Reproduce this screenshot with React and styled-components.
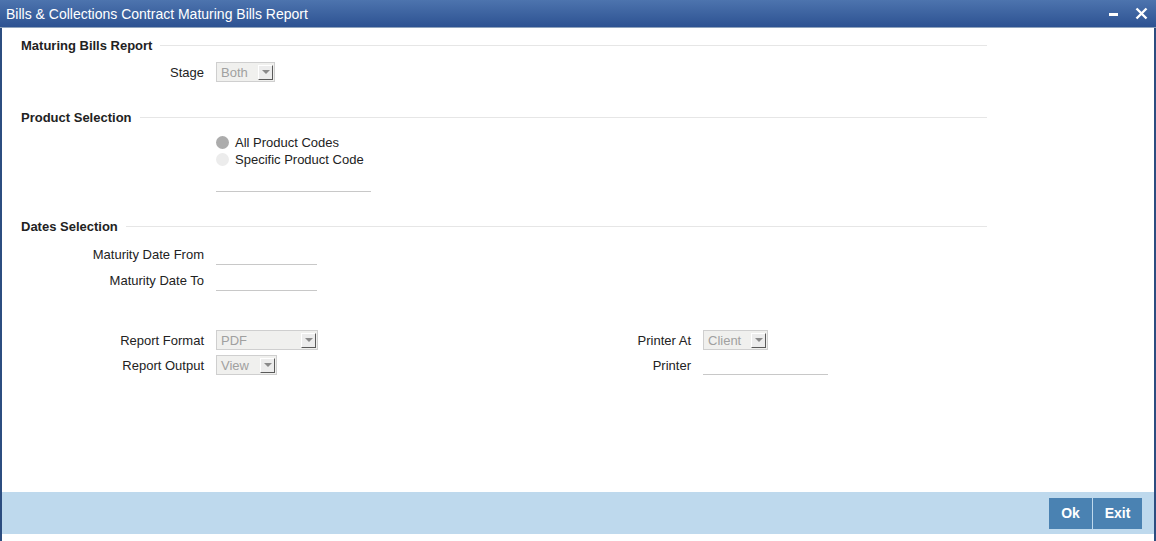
import React from "react";
import styled, { createGlobalStyle } from "styled-components";

const Global = createGlobalStyle`
  html, body { margin: 0; padding: 0; background: #fff; }
  body { font-family: "Liberation Sans", Arial, sans-serif; }
`;

const Window = styled.div`
  width: 1156px;
  height: 541px;
  box-sizing: border-box;
  display: flex;
  flex-direction: column;
  border-left: 2px solid #2c4d80;
  border-right: 2px solid #2c4d80;
  background: #fff;
  padding-bottom: 7px;
`;

const TitleBar = styled.div`
  height: 28px;
  margin: 0 -2px;
  box-sizing: border-box;
  display: flex;
  align-items: center;
  padding: 0 8px 0 6px;
  background: linear-gradient(#4d74ae, #2d5292);
  border-bottom: 1px solid #8fa3bd;
  color: #fff;
  font-size: 14px;
`;

const Title = styled.div`
  flex: 1;
`;

const WinButtons = styled.div`
  display: flex;
  align-items: center;
  gap: 16px;
`;

const Content = styled.div`
  flex: 1;
  padding: 7px 0 0 19px;
`;

const Section = styled.div`
  width: 966px;
  margin-top: ${(p) => p.$top || 0}px;
`;

const Heading = styled.div`
  display: flex;
  align-items: center;
  height: 20px;
  font-size: 13px;
  font-weight: bold;
  color: #222;
  gap: 8px;
  &::after {
    content: "";
    flex: 1;
    height: 1px;
    background: #e6e6e6;
  }
`;

const Row = styled.div`
  display: grid;
  grid-template-columns: 183px auto;
  column-gap: 12px;
  align-items: center;
  height: ${(p) => p.$h || 20}px;
  margin-top: ${(p) => p.$top || 0}px;
`;

const Label = styled.div`
  text-align: right;
  font-size: 13px;
  color: #222;
`;

const SelectBox = styled.div`
  width: ${(p) => p.$w}px;
  height: 20px;
  box-sizing: border-box;
  border: 1px solid #cfcfcf;
  background: #f0f0ee;
  display: flex;
  align-items: center;
  justify-content: space-between;
  padding: 0 1px 0 4px;
  font-size: 13px;
  color: #a0a0a0;
`;

const ArrowBtn = styled.div`
  width: 15px;
  height: 15px;
  box-sizing: border-box;
  border-top: 1px solid #fff;
  border-left: 1px solid #fff;
  border-right: 1px solid #5a5a5a;
  border-bottom: 1px solid #5a5a5a;
  background: #ececec;
  display: flex;
  align-items: center;
  justify-content: center;
  &::after {
    content: "";
    border-left: 4px solid transparent;
    border-right: 4px solid transparent;
    border-top: 4px solid #8a8a8a;
  }
`;

const Underline = styled.div`
  width: ${(p) => p.$w}px;
  height: ${(p) => p.$h || 20}px;
  box-sizing: border-box;
  border-bottom: 1px solid #c8c8c8;
`;

const RadioRow = styled.label`
  display: flex;
  align-items: center;
  gap: 6px;
  height: 17px;
  font-size: 13px;
  color: #222;
`;

const RadioDot = styled.span`
  width: 13px;
  height: 13px;
  border-radius: 50%;
  background: ${(p) => (p.$on ? "#acacac" : "#ececec")};
`;

const RadioGroup = styled.div`
  margin-top: 7px;
  margin-left: 195px;
`;

const Split = styled.div`
  display: grid;
  grid-template-columns: 487px auto;
  margin-top: 40px;
`;

const Col = styled.div`
  display: flex;
  flex-direction: column;
  gap: 5px;
`;

const Footer = styled.div`
  height: 42px;
  background: #bed9ed;
  display: flex;
  justify-content: flex-end;
  align-items: center;
  padding-right: 12px;
  gap: 1px;
`;

const Btn = styled.button`
  width: ${(p) => p.$w}px;
  height: 31px;
  border: none;
  background: #4a82b2;
  color: #fff;
  font-family: "Liberation Sans", Arial, sans-serif;
  font-size: 14px;
  font-weight: bold;
  padding: 0;
`;

function Select({ w, value }) {
  return (
    <SelectBox $w={w}>
      <span>{value}</span>
      <ArrowBtn />
    </SelectBox>
  );
}

export default function App() {
  return (
    <>
      <Global />
      <Window>
        <TitleBar>
          <Title>Bills &amp; Collections Contract Maturing Bills Report</Title>
          <WinButtons>
            <svg width="10" height="10" viewBox="0 0 10 10">
              <rect x="0" y="4" width="9" height="3" fill="#fff" />
            </svg>
            <svg width="13" height="13" viewBox="0 0 13 13">
              <path d="M1.5 1.5 L11.5 11.5 M11.5 1.5 L1.5 11.5" stroke="#fff" strokeWidth="2.4" />
            </svg>
          </WinButtons>
        </TitleBar>
        <Content>
          <Section>
            <Heading>Maturing Bills Report</Heading>
            <Row $top={7}>
              <Label>Stage</Label>
              <Select w={59} value="Both" />
            </Row>
          </Section>
          <Section $top={25}>
            <Heading>Product Selection</Heading>
            <RadioGroup>
              <RadioRow>
                <RadioDot $on />
                All Product Codes
              </RadioRow>
              <RadioRow>
                <RadioDot />
                Specific Product Code
              </RadioRow>
            </RadioGroup>
            <Row $top={4}>
              <span />
              <Underline $w={155} />
            </Row>
          </Section>
          <Section $top={24}>
            <Heading>Dates Selection</Heading>
            <Row $top={8}>
              <Label>Maturity Date From</Label>
              <Underline $w={101} $h={21} />
            </Row>
            <Row $top={6}>
              <Label>Maturity Date To</Label>
              <Underline $w={101} $h={21} />
            </Row>
            <Split>
              <Col>
                <Row>
                  <Label>Report Format</Label>
                  <Select w={102} value="PDF" />
                </Row>
                <Row>
                  <Label>Report Output</Label>
                  <Select w={61} value="View" />
                </Row>
              </Col>
              <Col>
                <Row>
                  <Label>Printer At</Label>
                  <Select w={65} value="Client" />
                </Row>
                <Row>
                  <Label>Printer</Label>
                  <Underline $w={125} />
                </Row>
              </Col>
            </Split>
          </Section>
        </Content>
        <Footer>
          <Btn $w={43}>Ok</Btn>
          <Btn $w={49}>Exit</Btn>
        </Footer>
      </Window>
    </>
  );
}
